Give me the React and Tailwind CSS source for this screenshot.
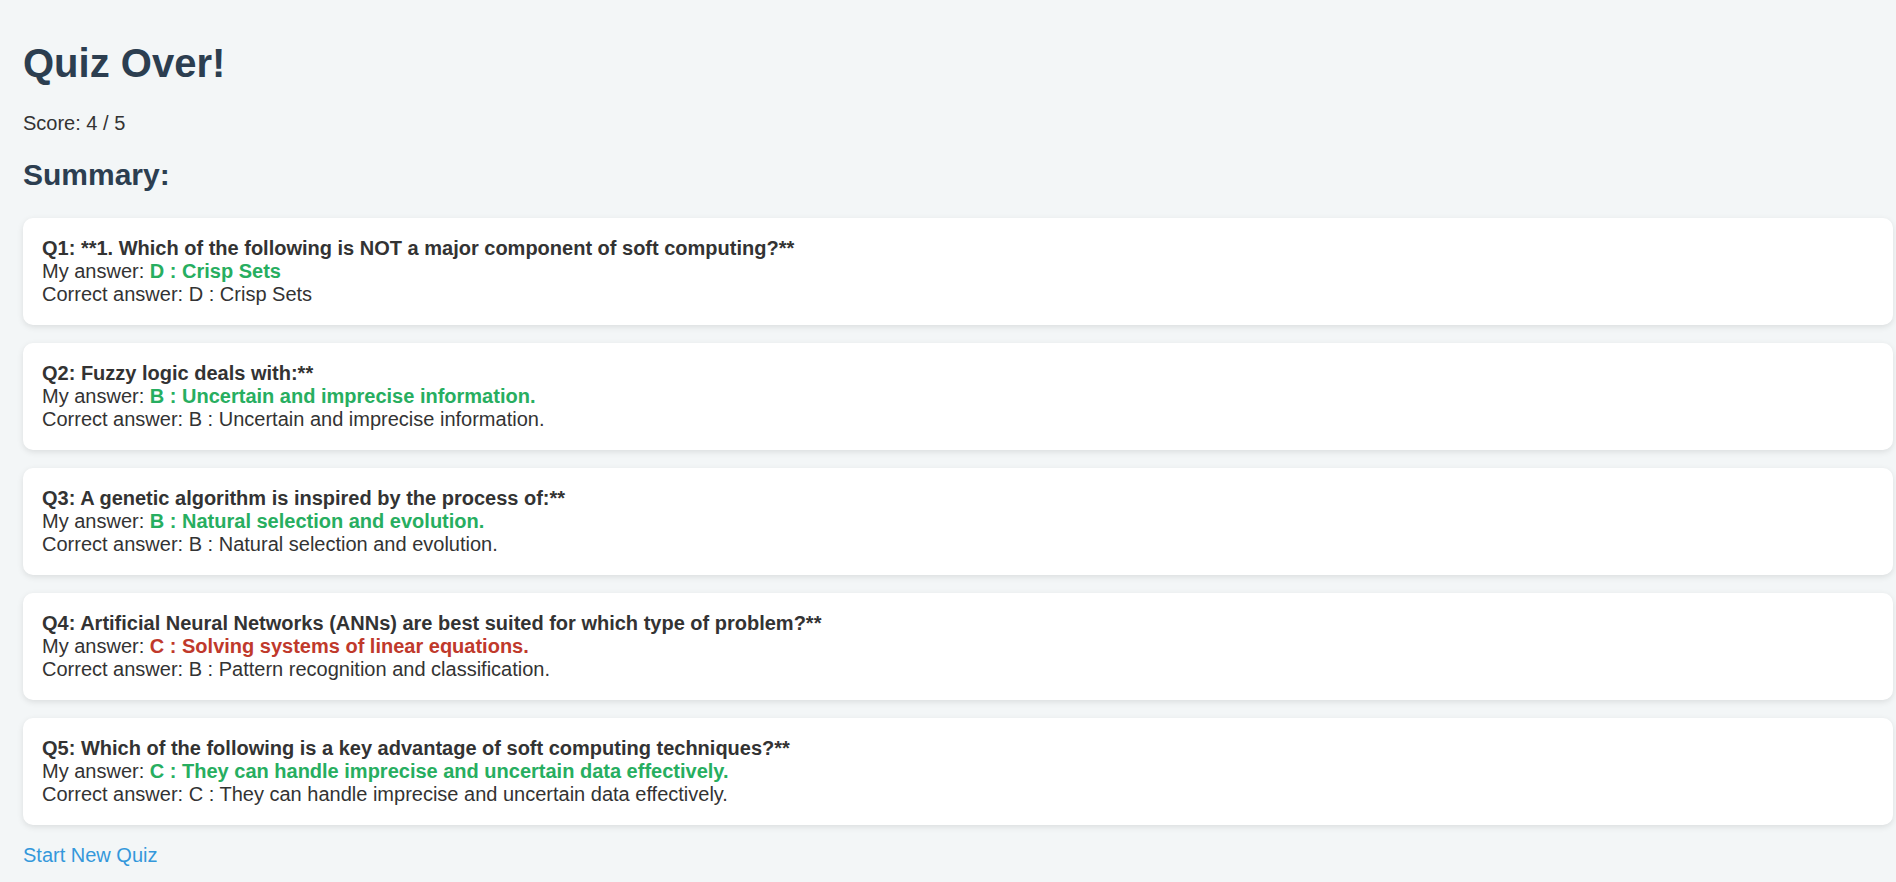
import React from "react";

const RESULTS = [
  {
    q: "**1. Which of the following is NOT a major component of soft computing?**",
    mine: "D : Crisp Sets",
    correct: "D : Crisp Sets",
    ok: true,
  },
  {
    q: "Fuzzy logic deals with:**",
    mine: "B : Uncertain and imprecise information.",
    correct: "B : Uncertain and imprecise information.",
    ok: true,
  },
  {
    q: "A genetic algorithm is inspired by the process of:**",
    mine: "B : Natural selection and evolution.",
    correct: "B : Natural selection and evolution.",
    ok: true,
  },
  {
    q: "Artificial Neural Networks (ANNs) are best suited for which type of problem?**",
    mine: "C : Solving systems of linear equations.",
    correct: "B : Pattern recognition and classification.",
    ok: false,
  },
  {
    q: "Which of the following is a key advantage of soft computing techniques?**",
    mine: "C : They can handle imprecise and uncertain data effectively.",
    correct: "C : They can handle imprecise and uncertain data effectively.",
    ok: true,
  },
];

export default function App() {
  return (
    <div
      className="min-h-screen bg-[#f3f6f7] pl-[23px] pr-[3px] pt-[40px] pb-[20px] text-[#333333]"
      style={{ fontFamily: '"Liberation Sans", Arial, sans-serif' }}
    >
      <h1 className="text-[40px] leading-[46px] font-bold text-[#2c3e50]">Quiz Over!</h1>
      <p className="mt-[26px] text-[20px] leading-[23px]">Score: 4 / 5</p>

      <h2 className="mt-[23px] text-[30px] leading-[34px] font-bold text-[#2c3e50]">Summary:</h2>

      {/* ===== RESULTS ===== */}
      <div className="mt-[26px] flex flex-col gap-[18px]">
        {RESULTS.map((r, i) => (
          <div
            key={i}
            className="bg-white rounded-[10px] px-[19px] py-[19px] text-[20px] leading-[23px] shadow-[0_2px_6px_rgba(0,0,0,0.1)]"
          >
            <div className="font-bold">
              Q{i + 1}: {r.q}
            </div>
            <div>
              My answer:{" "}
              <span className={`font-bold ${r.ok ? "text-[#27ae60]" : "text-[#c0392b]"}`}>{r.mine}</span>
            </div>
            <div>Correct answer: {r.correct}</div>
          </div>
        ))}
      </div>

      <a href="#" className="mt-[19px] block w-fit text-[20px] leading-[23px] text-[#3498db]">
        Start New Quiz
      </a>
    </div>
  );
}
